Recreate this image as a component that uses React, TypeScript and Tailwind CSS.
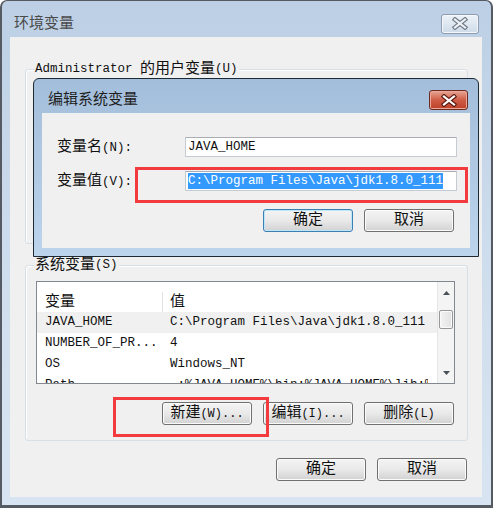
import React from "react";

type Kids = { children: React.ReactNode; className?: string };

// Chinese glyphs are rendered larger than the Latin mono text, like SimSun in the shot
const Z = ({ children, className = "" }: Kids) => (
  <span className={`text-[15px] ${className}`}>{children}</span>
);

const Btn = ({ children, focus = false }: { children: React.ReactNode; focus?: boolean }) => (
  <div
    className={`flex h-[23px] w-[90px] items-center justify-center rounded-[3px] border bg-linear-to-b from-[#f4f4f4] via-[#e9e9e9] to-[#d2d2d2] text-[12px] leading-none ${
      focus
        ? "border-[#3c7fb1] shadow-[inset_0_0_0_1px_#bde5f8]"
        : "border-[#707070] shadow-[inset_0_0_0_1px_#fbfbfb]"
    }`}
  >
    {children}
  </div>
);

const XGlyph = ({ outline, fill }: { outline: string; fill: string }) => (
  <svg width="16" height="13" viewBox="-1 -1 16 13">
    <path d="M2 1.5 L12 9.5 M12 1.5 L2 9.5" stroke={outline} strokeWidth="4.4" strokeLinecap="square" fill="none" />
    <path d="M2 1.5 L12 9.5 M12 1.5 L2 9.5" stroke={fill} strokeWidth="2.2" strokeLinecap="square" fill="none" />
  </svg>
);

const Arrow = ({ down = false }: { down?: boolean }) => (
  <svg width="7" height="4" viewBox="0 0 7 4">
    <polygon points={down ? "0,0 7,0 3.5,4" : "0,4 7,4 3.5,0"} fill="#4a5058" />
  </svg>
);

const rows = [
  { name: "JAVA_HOME", value: "C:\\Program Files\\Java\\jdk1.8.0_111", sel: true },
  { name: "NUMBER_OF_PR...", value: "4" },
  { name: "OS", value: "Windows_NT" },
  { name: "Path", value: ".;%JAVA_HOME%\\bin;%JAVA_HOME%\\lib;%JAVA_HOME%\\lib\\tools.jar" },
];

const App = () => {
  return (
    <div className="h-[508px] w-[493px] overflow-hidden bg-white">
      <div className="flex h-full w-full flex-col rounded-t-[7px] border-x-2 border-t border-b-[3px] border-[#565b63] bg-linear-to-b from-[#bccfe4] via-[#cedded] to-[#d8e4f1] font-['Liberation_Mono','Noto_Sans_CJK_SC',monospace] text-[12.5px] leading-none text-[#111]">
        {/* Title bar */}
        <div className="flex h-[36px] shrink-0 items-center justify-between pl-[12px] pr-[12px] pt-[9px]">
          <Z className="pt-[2px] text-[#4a4a4a]">环境变量</Z>
          <div className="flex h-[20px] w-[38px] items-center justify-center rounded-[3px] border border-[#8d9cae] bg-linear-to-b from-[#edf2f8] to-[#cfdbe8] shadow-[inset_0_0_0_1px_#f5f8fb]">
            <XGlyph outline="#6f7a87" fill="#eef1f5" />
          </div>
        </div>

        {/* Client area */}
        <div className="relative mb-[8px] ml-[8px] mr-[9px] flex flex-1 flex-col bg-[#f0f0f0]">
          {/* User variables group */}
          <div className="relative ml-[15px] mr-[14px] mt-[32px] h-[175px] rounded-[3px] border border-[#d5dfe5] shadow-[inset_1px_1px_0_#ffffff]">
            <div className="absolute -top-[9px] left-[8px] flex h-[16px] items-center whitespace-pre bg-[#f0f0f0] px-[1px]">
              Administrator <Z>的用户变量</Z>(U)
            </div>
          </div>

          {/* System variables group */}
          <div className="relative ml-[15px] mr-[14px] mt-[21px] h-[176px] rounded-[3px] border border-[#d5dfe5] pl-[10px] pt-[15px] shadow-[inset_1px_1px_0_#ffffff]">
            <div className="absolute -top-[9px] left-[8px] flex h-[16px] items-center bg-[#f0f0f0] px-[1px]">
              <Z>系统变量</Z>(S)
            </div>

            <div className="flex h-[103px] w-[419px] overflow-hidden border border-[#828790] bg-white">
              <div className="flex flex-1 flex-col overflow-hidden">
                <div className="flex h-[30px] shrink-0 pt-[10px]">
                  <div className="flex w-[126px] items-center border-r border-[#e3e3e3] pl-[8px]">
                    <Z>变量</Z>
                  </div>
                  <div className="flex items-center pl-[7px]">
                    <Z>值</Z>
                  </div>
                </div>
                {rows.map((r) => (
                  <div
                    key={r.name}
                    className={`flex h-[21px] shrink-0 items-center whitespace-pre ${r.sel ? "bg-[#f0f0f0]" : ""}`}
                  >
                    <div className="w-[126px] pl-[8px]">{r.name}</div>
                    <div className="w-[265px] overflow-hidden pl-[7px]">{r.value}</div>
                  </div>
                ))}
              </div>
              {/* Scrollbar */}
              <div className="flex w-[17px] shrink-0 flex-col border-l border-[#e6e6e6] bg-[#f4f4f4]">
                <div className="flex h-[17px] items-center justify-center pt-[4px]">
                  <Arrow />
                </div>
                <div className="mx-[1px] mt-[11px] h-[19px] rounded-[2px] border border-[#979797] bg-linear-to-r from-[#f3f3f3] to-[#e2e2e2] shadow-[inset_0_0_0_1px_#fafafa]" />
                <div className="flex-1" />
                <div className="flex h-[17px] items-center justify-center pb-[4px]">
                  <Arrow down />
                </div>
              </div>
            </div>

            <div className="mt-[18px] flex w-[419px] justify-end gap-[11px] pr-[1px]">
              <Btn>
                <Z>新建</Z>(W)...
              </Btn>
              <Btn>
                <Z>编辑</Z>(I)...
              </Btn>
              <Btn>
                <Z>删除</Z>(L)
              </Btn>
            </div>
          </div>

          {/* Bottom buttons */}
          <div className="mr-[15px] mt-[17px] flex justify-end gap-[11px]">
            <Btn>
              <Z>确定</Z>
            </Btn>
            <Btn>
              <Z>取消</Z>
            </Btn>
          </div>

          {/* Annotation around the 新建 button */}
          <div className="absolute left-[103px] top-[360px] h-[40px] w-[156px] border-[3px] border-[#f23a3f]" />

          {/* Edit system variable dialog, on top */}
          <div className="absolute left-[23px] top-[41px] flex h-[179px] w-[446px] flex-col rounded-t-[6px] border border-[#1d2a33] bg-linear-to-b from-[#a3bedb] via-[#b0c9e3] to-[#bcd4ec]">
            <div className="flex h-[34px] shrink-0 items-center justify-between pl-[14px] pr-[10px] pt-[8px]">
              <Z className="text-[#1e1e1e]">编辑系统变量</Z>
              <div className="flex h-[20px] w-[39px] items-center justify-center rounded-[3px] border border-[#6d2a20] bg-linear-to-b from-[#e6a595] via-[#cf5c45] to-[#bd3f29] shadow-[inset_0_0_0_1px_#e9a898]">
                <XGlyph outline="#5a1a10" fill="#ffffff" />
              </div>
            </div>
            <div className="relative mx-[8px] mb-[8px] flex flex-1 flex-col bg-[#f0f0f0] pt-[24px]">
              <div className="flex items-center pl-[15px]">
                <div className="w-[128px]">
                  <Z>变量名</Z>(N):
                </div>
                <div className="flex h-[20px] w-[272px] items-center border border-[#c6cbd2] border-t-[#abadb3] bg-white pl-[2px]">
                  JAVA_HOME
                </div>
              </div>
              <div className="mt-[14px] flex items-center pl-[15px]">
                <div className="w-[128px]">
                  <Z>变量值</Z>(V):
                </div>
                <div className="flex h-[20px] w-[272px] items-center border border-[#c6cbd2] border-t-[#abadb3] bg-white pl-[2px]">
                  <span className="flex h-[16px] items-center whitespace-pre bg-[#3399ff] text-white">
                    {"C:\\Program Files\\Java\\jdk1.8.0_111"}
                  </span>
                </div>
              </div>
              <div className="mt-[18px] flex justify-end gap-[11px] pr-[16px]">
                <Btn focus>
                  <Z>确定</Z>
                </Btn>
                <Btn>
                  <Z>取消</Z>
                </Btn>
              </div>
              {/* Annotation around the value field */}
              <div className="absolute left-[93px] top-[54px] h-[36px] w-[333px] border-[3px] border-[#f23a3f]" />
            </div>
          </div>
        </div>
      </div>
    </div>
  );
};

export default App;
